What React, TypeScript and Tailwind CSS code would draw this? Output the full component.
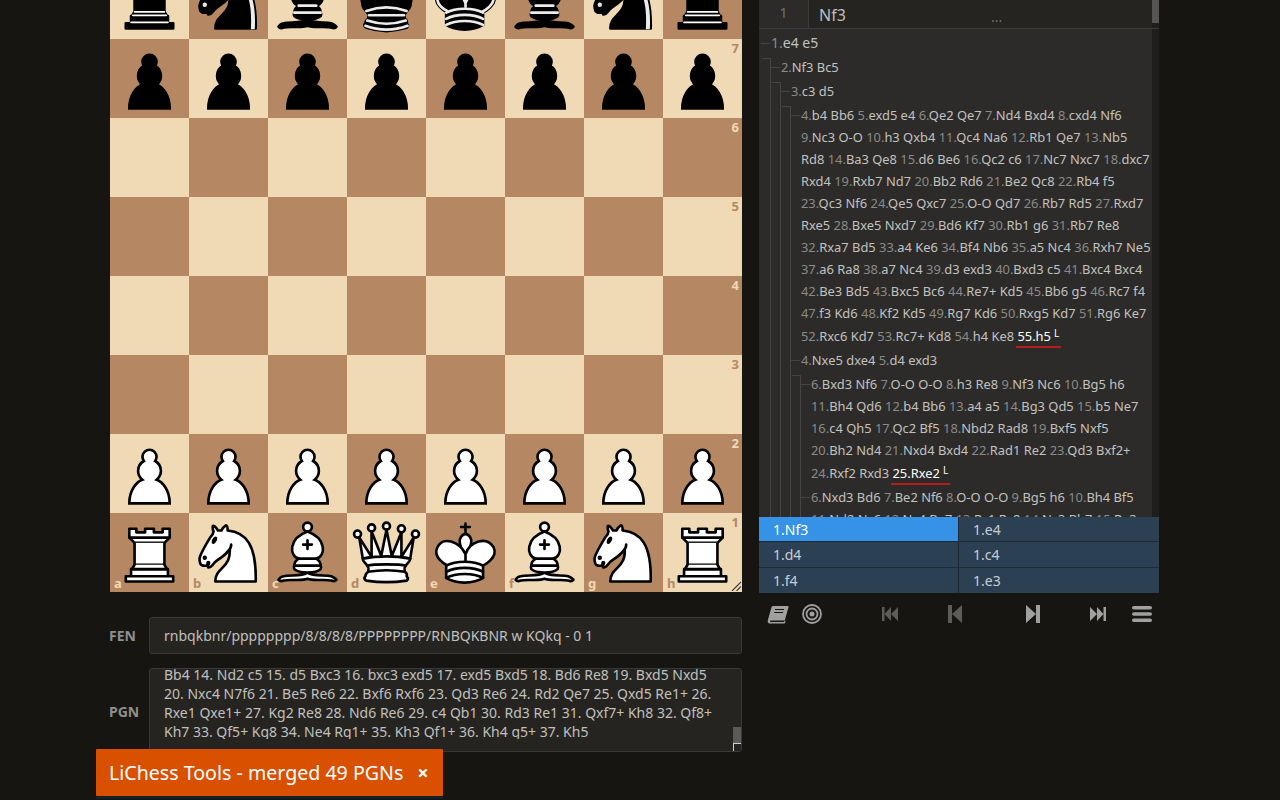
import React from "react";

const bodyPawn = "M22.5 9c-2.21 0-4 1.79-4 4 0 .89.29 1.71.78 2.38C17.33 16.5 16 18.59 16 21c0 2.03.94 3.84 2.41 5.03-3 1.06-7.41 5.55-7.41 13.47h23c0-7.92-4.41-12.41-7.41-13.47 1.47-1.19 2.41-3 2.41-5.03 0-2.41-1.33-4.5-3.28-5.62.49-.67.78-1.49.78-2.38 0-2.21-1.79-4-4-4z";
const kn1 = "M22 10c10.5 1 16.5 8 16 29H15c0-9 10-6.5 8-21";
const kn2 = "M24 18c.38 2.91-5.55 7.37-8 9-3 2-2.82 4.34-5 4-1.042-.94 1.41-3.04 0-3-1 0 .19 1.23-1 2-1 0-4.003 1-4-4 0-2 6-12 6-12s1.89-1.9 2-3.5c-.73-.994-.5-2-.5-3 1-1 3 2.5 3 2.5h2s.78-1.992 2.5-3c1 0 1 3 1 3";
const kn3 = "M9.5 25.5a.5.5 0 1 1-1 0 .5.5 0 1 1 1 0zm5.433-9.75a.5 1.5 30 1 1-.866-.5.5 1.5 30 1 1 .866.5z";
const bi1 = "M9 36c3.39-.97 10.11.43 13.5-2 3.39 2.43 10.11 1.03 13.5 2 0 0 1.65.54 3 2-.68.97-1.65.99-3 .5-3.39-.97-10.11.46-13.5-1-3.39 1.46-10.11.03-13.5 1-1.354.49-2.323.47-3-.5 1.354-1.94 3-2 3-2z";
const bi2 = "M15 32c2.5 2.5 12.5 2.5 15 0 .5-1.5 0-2 0-2 0-2.5-2.5-4-2.5-4 5.5-1.5 6-11.5-5-15.5-11 4-10.5 14-5 15.5 0 0-2.5 1.5-2.5 4 0 0-.5.5 0 2z";
const bi3 = "M25 8a2.5 2.5 0 1 1-5 0 2.5 2.5 0 1 1 5 0z";
const biL = "M17.5 26h10M15 30h15m-7.5-14.5v5M20 18h5";
const qBase = "M9 26c0 2 1.5 2 2.5 4 1 1.5 1 1 .5 3.5-1.5 1-1.5 2.5-1.5 2.5-1.5 1.5.5 2.5.5 2.5 6.5 1 16.5 1 23 0 0 0 1.5-1 0-2.5 0 0 .5-1.5-1-2.5-.5-2.5-.5-2 .5-3.5 1-2 2.5-2 2.5-4-8.5-1.5-18.5-1.5-27 0z";
const kHead = "M22.5 25s4.5-7.5 3-10.5c0 0-1-2.5-3-2.5s-3 2.5-3 2.5c-1.5 3 3 10.5 3 10.5";
const kBody = "M11.5 37c5.5 3.5 15.5 3.5 21 0v-7s9-4.5 6-10.5c-4-6.5-13.5-3.5-16 4V27v-3.5c-3.5-7.5-13-10.5-16-4-3 6 5 10 5 10V37z";
const kBands = "M11.5 30c5.5-3 15.5-3 21 0m-21 3.5c5.5-3 15.5-3 21 0m-21 3.5c5.5-3 15.5-3 21 0";

const PIECES: Record<string, React.ReactNode> = {
  P: <path d={bodyPawn} fill="#fff" stroke="#000" strokeWidth={1.5} strokeLinecap="round" />,
  p: <path d={bodyPawn} fill="#000" stroke="#000" strokeWidth={1.5} strokeLinecap="round" />,
  R: (
    <g fill="#fff" fillRule="evenodd" stroke="#000" strokeLinecap="round" strokeLinejoin="round" strokeWidth={1.5}>
      <path strokeLinecap="butt" d="M9 39h27v-3H9v3zM12 36v-4h21v4H12zM11 14V9h4v2h5V9h5v2h5V9h4v5" />
      <path d="M34 14l-3 3H14l-3-3" />
      <path strokeLinecap="butt" strokeLinejoin="miter" d="M31 17v12.5H14V17" />
      <path d="M31 29.5l1.5 2.5h-20l1.5-2.5" />
      <path fill="none" strokeLinejoin="miter" d="M11 14h23" />
    </g>
  ),
  r: (
    <g fillRule="evenodd" stroke="#000" strokeLinecap="round" strokeLinejoin="round" strokeWidth={1.5}>
      <path strokeLinecap="butt" d="M9 39h27v-3H9v3zM12.5 32l1.5-2.5h17l1.5 2.5h-20zM12 36v-4h21v4H12z" />
      <path strokeLinecap="butt" strokeLinejoin="miter" d="M14 29.5v-13h17v13H14z" />
      <path strokeLinecap="butt" d="M14 16.5L11 14h23l-3 2.5H14zM11 14V9h4v2h5V9h5v2h5V9h4v5H11z" />
      <path fill="none" stroke="#fff" strokeLinejoin="miter" strokeWidth={1} d="M12 35.5h21M13 31.5h19M14 29.5h17M14 16.5h17M11 14h23" />
    </g>
  ),
  N: (
    <g fill="none" fillRule="evenodd" stroke="#000" strokeLinecap="round" strokeLinejoin="round" strokeWidth={1.5}>
      <path d={kn1} fill="#fff" />
      <path d={kn2} fill="#fff" />
      <path d={kn3} fill="#000" />
    </g>
  ),
  n: (
    <g fill="none" fillRule="evenodd" stroke="#000" strokeLinecap="round" strokeLinejoin="round" strokeWidth={1.5}>
      <path d={kn1} fill="#000" />
      <path d={kn2} fill="#000" />
      <path d={kn3} fill="#ececec" stroke="#ececec" />
      <path fill="#ececec" stroke="none" d="M24.55 10.4l-.45 1.45.5.15c3.15 1 5.65 2.49 7.9 6.75S35.75 29.06 35.25 39l-.05.5h2.25l.05-.5c.5-10.06-.88-16.85-3.25-21.34-2.37-4.49-5.79-6.64-9.19-7.16l-.51-.1z" />
    </g>
  ),
  B: (
    <g fill="none" fillRule="evenodd" stroke="#000" strokeWidth={1.5} strokeLinecap="round" strokeLinejoin="round">
      <g fill="#fff" strokeLinecap="butt">
        <path d={bi1} />
        <path d={bi2} />
        <path d={bi3} />
      </g>
      <path d={biL} strokeLinejoin="miter" />
    </g>
  ),
  b: (
    <g fill="none" fillRule="evenodd" stroke="#000" strokeWidth={1.5} strokeLinecap="round" strokeLinejoin="round">
      <g fill="#000" strokeLinecap="butt">
        <path d={bi1} />
        <path d={bi2} />
        <path d={bi3} />
      </g>
      <path d={biL} stroke="#ececec" strokeLinejoin="miter" />
    </g>
  ),
  Q: (
    <g fill="#fff" fillRule="evenodd" stroke="#000" strokeWidth={1.5} strokeLinejoin="round">
      <path d="M8 12a2 2 0 1 1-4 0 2 2 0 1 1 4 0zM24.5 7.5a2 2 0 1 1-4 0 2 2 0 1 1 4 0zM41 12a2 2 0 1 1-4 0 2 2 0 1 1 4 0zM16 8.5a2 2 0 1 1-4 0 2 2 0 1 1 4 0zM33 9a2 2 0 1 1-4 0 2 2 0 1 1 4 0z" />
      <path d="M9 26c8.5-1.5 21-1.5 27 0l2-12-7 11V11l-5.5 13.5-3-15-3 15-5.5-14V25L7 14l2 12z" strokeLinecap="butt" />
      <path d={qBase} strokeLinecap="butt" />
      <path d="M11.5 30c3.5-1 18.5-1 22 0M12 33.5c6-1 15-1 21 0" fill="none" />
    </g>
  ),
  q: (
    <g fillRule="evenodd" stroke="#000" strokeWidth={1.5} strokeLinecap="round" strokeLinejoin="round">
      <g stroke="none">
        <circle cx="6" cy="12" r="2.75" />
        <circle cx="14" cy="9" r="2.75" />
        <circle cx="22.5" cy="8" r="2.75" />
        <circle cx="31" cy="9" r="2.75" />
        <circle cx="39" cy="12" r="2.75" />
      </g>
      <path strokeLinecap="butt" d="M9 26c8.5-1.5 21-1.5 27 0l2.5-12.5L31 25l-.3-14.1-5.2 13.6-3-14.5-3 14.5-5.2-13.6L14 25 6.5 13.5 9 26z" />
      <path strokeLinecap="butt" d={qBase} />
      <path fill="none" strokeLinecap="butt" d="M11 38.5a35 35 1 0 0 23 0" />
      <path fill="none" stroke="#ececec" d="M11 29a35 35 1 0 1 23 0m-21.5 2.5h20m-21 3a35 35 1 0 0 22 0m-23 3a35 35 1 0 0 24 0" />
    </g>
  ),
  K: (
    <g fill="none" fillRule="evenodd" stroke="#000" strokeLinecap="round" strokeLinejoin="round" strokeWidth={1.5}>
      <path strokeLinejoin="miter" d="M22.5 11.63V6M20 8h5" />
      <path fill="#fff" strokeLinecap="butt" strokeLinejoin="miter" d={kHead} />
      <path fill="#fff" d={kBody} />
      <path d={kBands} />
    </g>
  ),
  k: (
    <g fill="none" fillRule="evenodd" stroke="#000" strokeLinecap="round" strokeLinejoin="round" strokeWidth={1.5}>
      <path strokeLinejoin="miter" d="M22.5 11.63V6" />
      <path fill="#000" strokeLinecap="butt" strokeLinejoin="miter" d={kHead} />
      <path fill="#000" d={kBody} />
      <path strokeLinejoin="miter" d="M20 8h5" />
      <path stroke="#ececec" d="M32 29.5s8.5-4 6.03-9.65C34.15 14 25 18 22.5 24.5l.01 2.1-.01-2.1C20 18 9.906 14 6.997 19.85c-2.497 5.65 4.853 9 4.853 9" />
      <path stroke="#ececec" d={kBands} />
    </g>
  ),
};

const BOARD = ["rnbqkbnr", "pppppppp", "        ", "        ", "        ", "        ", "PPPPPPPP", "RNBQKBNR"];
const FILES = "abcdefgh";

function Board() {
  return (
    <div className="relative grid w-[632px] h-[632px] grid-cols-[repeat(8,79px)] grid-rows-[repeat(8,79px)]">
      {BOARD.flatMap((row, r) =>
        row.split("").map((c, f) => {
          const light = (r + f) % 2 === 0;
          return (
            <div key={`${r}-${f}`} className={`relative ${light ? "bg-[#f0d9b5]" : "bg-[#b58863]"}`}>
              {c !== " " && (
                <svg viewBox="0 0 45 45" className="block w-full h-full">
                  {PIECES[c]}
                </svg>
              )}
              {f === 7 && (
                <span className={`absolute right-[3px] top-[1px] text-[13px] leading-[16px] font-bold ${light ? "text-[#b58863]" : "text-[#f0d9b5]"}`}>
                  {8 - r}
                </span>
              )}
              {r === 7 && (
                <span className={`absolute left-[4px] bottom-[1px] text-[13px] leading-[16px] font-bold ${light ? "text-[#b58863]" : "text-[#f0d9b5]"}`}>
                  {FILES[f]}
                </span>
              )}
            </div>
          );
        })
      )}
      <svg viewBox="0 0 10 10" className="absolute right-px bottom-px w-[10px] h-[10px]" stroke="#3a3a3a" strokeWidth="1.1">
        <path d="M1 10 L10 1 M5.5 10 L10 5.5" />
      </svg>
    </div>
  );
}

function Moves({ text }: { text: string }) {
  return (
    <>
      {text.split(" ").map((t, i) => {
        const m = t.match(/^(\d+\.)(.*)$/);
        return (
          <React.Fragment key={i}>
            {m ? (
              <>
                <span className="text-[#8a8a88]">{m[1]}</span>
                {m[2]}
              </>
            ) : (
              t
            )}{" "}
          </React.Fragment>
        );
      })}
    </>
  );
}

function Row({ text, special, big }: { text: string; special?: string; big?: boolean }) {
  const lines = text.split("|");
  return (
    <div className={`flex ${special ? "pt-px" : "py-px"}`}>
      <div className="w-[9px] h-px mt-[11px] shrink-0 bg-[#454442]" />
      <div className={`flex-1 min-w-0 leading-[22px] text-[#c2c2c0] pl-[1px] whitespace-nowrap ${big ? "text-[14px]" : "text-[12.9px]"}`}>
        {lines.map((l, i) => (
          <div key={i}>
            <Moves text={l} />
            {special && i === lines.length - 1 && (
              <span className="inline-block -ml-[1px] leading-[19px] px-[1px] border-b-2 border-[#b81c1c] text-white">
                {special}
                <span className="text-[10px] align-[4px] ml-[3px] mr-[1px]">L</span>
              </span>
            )}
          </div>
        ))}
      </div>
    </div>
  );
}

function Branch({ children }: { children: React.ReactNode }) {
  return (
    <div className="mt-[3px] ml-[9px] border-l border-[#454442]">
      <div className="h-px w-[9px] -ml-[9px] bg-[#454442]" />
      <div className="-mt-[4px]">{children}</div>
    </div>
  );
}

function Tree() {
  return (
    <div className="flex-1 min-w-0 h-[488px] overflow-hidden bg-[#2c2b29] pl-[2px] pt-[2px]">
      <Row big text="1.e4 e5" />
      <Branch>
        <Row text="2.Nf3 Bc5" />
        <Branch>
          <Row text="3.c3 d5" />
          <Branch>
            <Row
              special="55.h5"
              text="4.b4 Bb6 5.exd5 e4 6.Qe2 Qe7 7.Nd4 Bxd4 8.cxd4 Nf6|9.Nc3 O-O 10.h3 Qxb4 11.Qc4 Na6 12.Rb1 Qe7 13.Nb5|Rd8 14.Ba3 Qe8 15.d6 Be6 16.Qc2 c6 17.Nc7 Nxc7 18.dxc7|Rxd4 19.Rxb7 Nd7 20.Bb2 Rd6 21.Be2 Qc8 22.Rb4 f5|23.Qc3 Nf6 24.Qe5 Qxc7 25.O-O Qd7 26.Rb7 Rd5 27.Rxd7|Rxe5 28.Bxe5 Nxd7 29.Bd6 Kf7 30.Rb1 g6 31.Rb7 Re8|32.Rxa7 Bd5 33.a4 Ke6 34.Bf4 Nb6 35.a5 Nc4 36.Rxh7 Ne5|37.a6 Ra8 38.a7 Nc4 39.d3 exd3 40.Bxd3 c5 41.Bxc4 Bxc4|42.Be3 Bd5 43.Bxc5 Bc6 44.Re7+ Kd5 45.Bb6 g5 46.Rc7 f4|47.f3 Kd6 48.Kf2 Kd5 49.Rg7 Kd6 50.Rxg5 Kd7 51.Rg6 Ke7|52.Rxc6 Kd7 53.Rc7+ Kd8 54.h4 Ke8"
            />
            <Row text="4.Nxe5 dxe4 5.d4 exd3" />
            <Branch>
              <Row
                special="25.Rxe2"
                text="6.Bxd3 Nf6 7.O-O O-O 8.h3 Re8 9.Nf3 Nc6 10.Bg5 h6|11.Bh4 Qd6 12.b4 Bb6 13.a4 a5 14.Bg3 Qd5 15.b5 Ne7|16.c4 Qh5 17.Qc2 Bf5 18.Nbd2 Rad8 19.Bxf5 Nxf5|20.Bh2 Nd4 21.Nxd4 Bxd4 22.Rad1 Re2 23.Qd3 Bxf2+|24.Rxf2 Rxd3"
              />
              <Row text="6.Nxd3 Bd6 7.Be2 Nf6 8.O-O O-O 9.Bg5 h6 10.Bh4 Bf5|11.Nd2 Nc6 12.Nc4 Be7 13.Rc1 Rc8 14.Nc3 Bb7 15.Re3" />
            </Branch>
          </Branch>
        </Branch>
      </Branch>
    </div>
  );
}

function Cell({ children, on, noBorderB, noBorderR }: { children: string; on?: boolean; noBorderB?: boolean; noBorderR?: boolean }) {
  return (
    <div
      className={`flex items-center pl-[14px] text-[14px] ${noBorderB ? "" : "border-b"} ${noBorderR ? "" : "border-r"} border-[#1d2b38] ${on ? "bg-[#3692e7] text-white" : "bg-[#2c4054] text-[#c9cdd1]"}`}
    >
      {children}
    </div>
  );
}

function Toolbar() {
  return (
    <div className="flex items-center h-[40px] pt-[2px] text-[#a0a0a0]">
      <svg viewBox="0 0 22 19" className="ml-[8px] w-[22px] h-[19px]" fill="currentColor" strokeLinejoin="round">
        <path d="M6 1h14.500c.8 0 1.200.5 1 1.200L18 14.500c-.2.7-.6 1-1.300 1H4c-1.400 0-1.500 1.500 0 1.500h13l.6-1.500 1 .5-.8 2.500H3C.8 18.500.2 16.500 1 14.500L4.500 2.200C4.700 1.400 5.200 1 6 1z" />
        <path d="M8 4.500h9M7.200 7.500h9" stroke="#161512" strokeWidth="1" />
      </svg>
      <svg viewBox="0 0 20 20" className="ml-[13px] w-[20px] h-[20px]" fill="none" stroke="currentColor">
        <circle cx="10" cy="10" r="9" strokeWidth="1.800" />
        <circle cx="10" cy="10" r="5.500" strokeWidth="1.800" />
        <circle cx="10" cy="10" r="2.500" fill="currentColor" stroke="none" />
      </svg>
      <svg viewBox="0 0 16 14" className="ml-[60px] w-[16px] h-[14px] text-[#5c5c5a]" fill="currentColor">
        <path d="M0 0h2.500v14H0zM9 0v14L2.500 7zM16 0v14L9 7z" />
      </svg>
      <svg viewBox="0 0 14 18" className="ml-[50px] w-[14px] h-[18px] text-[#5c5c5a]" fill="currentColor">
        <path d="M0 0h4v18H0zM14 0v18L4 9z" />
      </svg>
      <svg viewBox="0 0 14 18" className="ml-[64px] w-[14px] h-[18px]" fill="currentColor">
        <path d="M10 0h4v18h-4zM0 0v18l10-9z" />
      </svg>
      <svg viewBox="0 0 16 14" className="ml-[50px] w-[16px] h-[14px]" fill="currentColor">
        <path d="M13.500 0H16v14h-2.500zM7 0v14l6.500-7zM0 0v14l7-7z" />
      </svg>
      <svg viewBox="0 0 20 16" className="ml-[26px] w-[20px] h-[16px]" fill="currentColor">
        <rect x="0" y="0" width="20" height="3.600" rx="1.800" />
        <rect x="0" y="6.200" width="20" height="3.600" rx="1.800" />
        <rect x="0" y="12.400" width="20" height="3.600" rx="1.800" />
      </svg>
    </div>
  );
}

export default function App() {
  return (
    <div className="relative w-[1280px] h-[800px] overflow-hidden bg-[#161512] font-['Noto_Sans',sans-serif]">
      <div className="flex gap-[17px] pl-[110px] -mt-[40px]">
        <div className="w-[632px] shrink-0">
          <Board />
          <div className="mt-[25px] flex items-center">
            <label className="-ml-px w-[40px] text-[14px] font-bold text-[#8f8f8d]">FEN</label>
            <div className="flex-1 h-[37px] flex items-center pl-[14px] rounded-[3px] border border-[#3a3937] bg-[#262421] text-[14px] text-[#c0c0be]">
              rnbqkbnr/pppppppp/8/8/8/8/PPPPPPPP/RNBQKBNR w KQkq - 0 1
            </div>
          </div>
          <div className="mt-[14px] flex items-center">
            <label className="-ml-px w-[40px] pt-[2px] text-[14px] font-bold text-[#8f8f8d]">PGN</label>
            <div className="flex-1 h-[84px] flex rounded-[3px] border border-[#3a3937] bg-[#262421]">
              <div className="flex-1 min-w-0 h-[70px] overflow-hidden pl-[14px] text-[14px] leading-[19px] text-[#c0c0be] whitespace-nowrap">
                <div className="-mt-[4px]">
                  <div>Bb4 14. Nd2 c5 15. d5 Bxc3 16. bxc3 exd5 17. exd5 Bxd5 18. Bd6 Re8 19. Bxd5 Nxd5</div>
                  <div>20. Nxc4 N7f6 21. Be5 Re6 22. Bxf6 Rxf6 23. Qd3 Re6 24. Rd2 Qe7 25. Qxd5 Re1+ 26.</div>
                  <div>Rxe1 Qxe1+ 27. Kg2 Re8 28. Nd6 Re6 29. c4 Qb1 30. Rd3 Re1 31. Qxf7+ Kh8 32. Qf8+</div>
                  <div>Kh7 33. Qf5+ Kg8 34. Ne4 Rg1+ 35. Kh3 Qf1+ 36. Kh4 g5+ 37. Kh5</div>
                </div>
              </div>
              <div className="w-[8px] shrink-0 flex flex-col justify-end">
                <div className="h-[16px] bg-[#5a5a58]" />
                <div className="h-[8px] border-l border-t border-[#cfcfcf] bg-[#262421]" />
              </div>
            </div>
          </div>
        </div>

        <div className="w-[400px] shrink-0">
          <div className="flex h-[69px] border-b border-[#3d3c3a] bg-[#262421]">
            <div className="w-[50px] shrink-0 bg-[#2c2b29] border-r border-[#3d3c3a] flex items-end justify-center pb-[5px] text-[14px] text-[#6f6f6d]">
              1
            </div>
            <div className="w-[176px] shrink-0 flex items-end pb-[1px] pl-[10px] text-[16px] text-[#bfbfbd]">Nf3</div>
            <div className="w-[167px] flex items-end pb-[1px] pl-[6px] text-[14px] text-[#6f6f6d]">...</div>
            <div className="w-[7px] shrink-0 bg-[#1f1e1c]">
              <div className="h-[63px] bg-[#555553]" />
            </div>
          </div>
          <div className="flex">
            <Tree />
            <div className="w-[7px] shrink-0 bg-[#1f1e1c]" />
          </div>
          <div className="grid grid-cols-[200px_200px] grid-rows-[25px_26px_25px]">
            <Cell on>1.Nf3</Cell>
            <Cell noBorderR>1.e4</Cell>
            <Cell>1.d4</Cell>
            <Cell noBorderR>1.c4</Cell>
            <Cell noBorderB>1.f4</Cell>
            <Cell noBorderB noBorderR>1.e3</Cell>
          </div>
          <Toolbar />
        </div>
      </div>

      <div className="absolute left-[96px] top-[749px] w-[347px] h-[47px] flex items-center pl-[13px] bg-[#d85000] text-white text-[19.6px] rounded-[1px] shadow-[0_3px_0_#14202a]">
        <span>LiChess Tools - merged 49 PGNs</span>
        <span className="ml-[14px] text-[20px] font-bold">×</span>
      </div>
    </div>
  );
}
